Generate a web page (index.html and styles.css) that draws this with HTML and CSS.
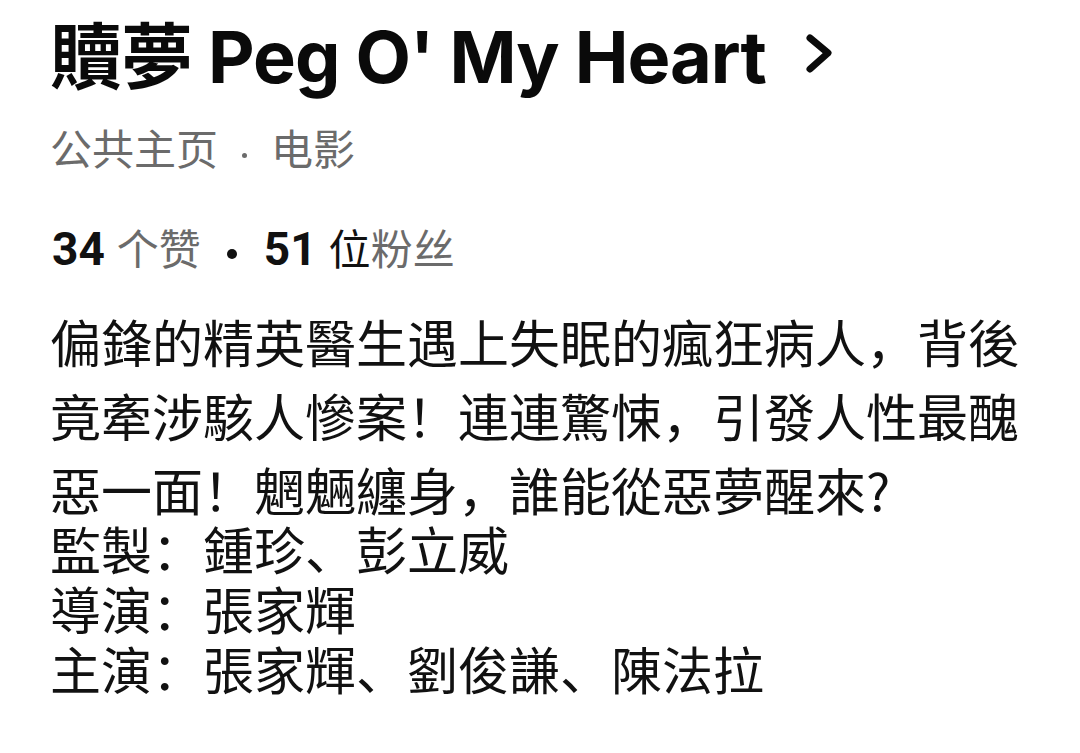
FILE: index.html
```html
<!DOCTYPE html>
<html lang="zh-CN">
<head>
<meta charset="utf-8">
<title>贖夢 Peg O' My Heart</title>
<link rel="stylesheet" href="styles.css">
</head>
<body>
<div class="page">

<h1 class="title"><span class="title-text">贖夢 Peg O' My Heart</span><svg class="chev" width="32" height="48" viewBox="0 0 32 48"><polyline points="7,9 25,24 7,40" fill="none" stroke="#0a0a0a" stroke-width="7" stroke-linecap="round" stroke-linejoin="round"/></svg></h1>

<div class="kind">公共主页<span class="sep"></span>电影</div>

<div class="stats"><b class="num">34</b><span class="muted gap">个赞</span><span class="dot"></span><b class="num">51</b><span class="gap">位</span><span class="muted">粉丝</span></div>

<p class="about">偏鋒的精英醫生遇上失眠的瘋狂病人，背後竟牽涉駭人慘案！連連驚悚，引發人性最醜惡一面！魍魎纏身，誰能從惡夢醒來?</p>

<div class="credits">
<div>監製：鍾珍、彭立威</div>
<div>導演：張家輝</div>
<div>主演：張家輝、劉俊謙、陳法拉</div>
</div>

</div>
</body>
</html>
```

FILE: styles.css
```css
/* Page info card */

body
{ margin: 0;
background-color: #ffffff;
color: #111111;
font-family: "Noto Sans CJK SC", sans-serif;
}

div.page
{ padding: 12px 50px 0 50px;
}

h1.title
{ margin: 0;
display: flex;
align-items: center;
font-family: Inter, "Noto Sans CJK SC", sans-serif;
font-size: 72px;
font-weight: 700;
line-height: 90px;
color: #0a0a0a;
}

span.title-text
{ letter-spacing: -1px;
}

svg.chev
{ margin-left: 37px;
margin-top: -8px;
}

div.kind
{ margin-top: 15px;
font-size: 42px;
line-height: 60px;
color: #6b6b6b;
}

span.sep
{ display: inline-block;
width: 5px;
height: 5px;
margin: 0 24px 0 24px;
border-radius: 50%;
background-color: #6b6b6b;
vertical-align: middle;
position: relative;
top: 2px;
}

div.stats
{ margin-top: 40px;
padding-left: 2px;
height: 60px;
font-size: 42px;
line-height: 60px;
color: #111111;
}

b.num
{ font-family: Roboto, sans-serif;
font-weight: 700;
font-size: 46px;
}

span.gap
{ margin-left: 12px;
}

span.muted
{ color: #6b6b6b;
}

span.dot
{ display: inline-block;
width: 10px;
height: 10px;
margin: 0 27px 0 26px;
border-radius: 50%;
background-color: #111111;
vertical-align: middle;
}

p.about
{ margin: 27px 0 0 0;
font-size: 51px;
line-height: 74px;
}

div.credits
{ margin-top: -8px;
font-size: 51px;
line-height: 60px;
}
```
